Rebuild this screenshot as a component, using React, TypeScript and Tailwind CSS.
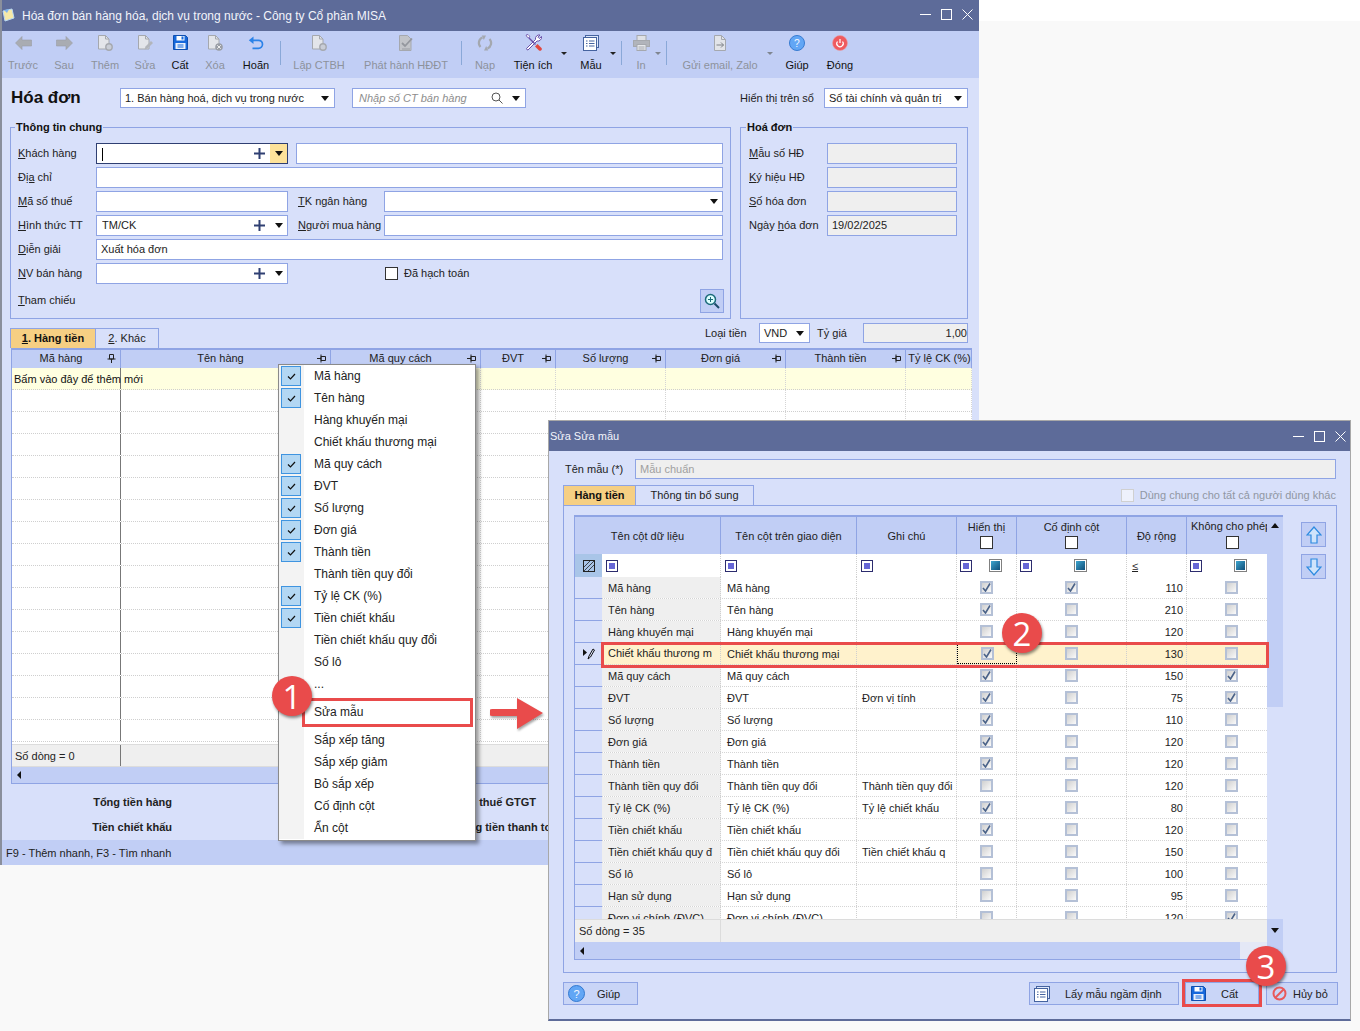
import React from "react";

const B = "border border-[#8fa4e4]";

function Caret({ c = "#111" }: { c?: string }) {
  return (
    <svg width="8" height="5" viewBox="0 0 8 5" className="shrink-0">
      <path d="M0 0h8L4 5z" fill={c} />
    </svg>
  );
}

function Plus() {
  return (
    <svg width="11" height="11" viewBox="0 0 11 11" className="shrink-0">
      <path d="M5.5 0v11M0 5.5h11" stroke="#2f3f72" strokeWidth="2" />
    </svg>
  );
}

function WinControls() {
  return (
    <div className="flex items-center gap-[10px]">
      <svg width="11" height="11" viewBox="0 0 11 11"><path d="M0 5.5h11" stroke="#fff" /></svg>
      <svg width="11" height="11" viewBox="0 0 11 11"><rect x=".5" y=".5" width="10" height="10" fill="none" stroke="#fff" /></svg>
      <svg width="11" height="11" viewBox="0 0 11 11"><path d="M.5.5l10 10M10.5.5l-10 10" stroke="#fff" /></svg>
    </div>
  );
}

/* ---------- toolbar icons ---------- */
const G = "#a5a8ae";
function IconArrow({ dir }: { dir: "l" | "r" }) {
  return (
    <svg width="17" height="14" viewBox="0 0 17 14" style={{ transform: dir === "r" ? "scaleX(-1)" : undefined }}>
      <path d="M.5 7L7 .5V4h9.500v6H7v3.500z" fill="#a9acb2" stroke="#9a9da4" strokeWidth=".6" />
    </svg>
  );
}
function Doc({ children }: { children?: React.ReactNode }) {
  return (
    <svg width="15" height="16" viewBox="0 0 15 16">
      <path d="M.5.5h7l3.500 3.500v10h-10.500z" fill="#e3e5ea" stroke={G} />
      <path d="M7.500.5v3.500h3.500" fill="none" stroke={G} />
      {children}
    </svg>
  );
}
function IconNew() {
  return <Doc><circle cx="11" cy="12" r="3.200" fill="#c9cdd6" stroke={G} strokeWidth="1.400" /></Doc>;
}
function IconEdit() {
  return <Doc><path d="M6.500 14.500l1-3 5.500-5.500 2 2-5.500 5.500z" fill="#b2b5bb" /></Doc>;
}
function IconDel() {
  return <Doc><circle cx="11" cy="12" r="3.800" fill="#9a9ea6" /><path d="M9.200 10.200l3.600 3.600M12.800 10.200l-3.600 3.600" stroke="#eee" /></Doc>;
}
function IconSave({ s = 15 }: { s?: number }) {
  return (
    <svg width={s} height={s} viewBox="0 0 15 15">
      <path d="M.5.5h12l2 2v12H.5z" fill="#1668dc" stroke="#0f4fb0" />
      <rect x="3.500" y="1" width="8" height="4.500" fill="#fff" />
      <rect x="8.500" y="1.500" width="2" height="3" fill="#1668dc" />
      <rect x="2.500" y="8" width="10" height="6" fill="#e9f0fb" />
      <path d="M4.500 10h6M4.500 12h6" stroke="#1668dc" />
    </svg>
  );
}
function IconUndo() {
  return (
    <svg width="16" height="14" viewBox="0 0 16 14">
      <path d="M5.500.5L.8 4.300 5.500 8z" fill="#2b82e8" />
      <path d="M3 4.300h7.500a3.800 3.800 0 010 8H4.500" fill="none" stroke="#2b82e8" strokeWidth="1.700" />
    </svg>
  );
}
function IconPublish() {
  return (
    <svg width="15" height="16" viewBox="0 0 15 16">
      <path d="M.5.5h8l3.500 3.500v11.500H.5z" fill="#c2c4c9" stroke={G} />
      <path d="M3 8l3 3 7-7.500" fill="none" stroke="#94979e" strokeWidth="1.800" />
      <path d="M3 14h8" stroke="#9a9da4" />
    </svg>
  );
}
function IconReload() {
  return (
    <svg width="16" height="16" viewBox="0 0 16 16" fill="none" stroke="#a4a8af" strokeWidth="2.200">
      <path d="M3.500 12A5.800 5.800 0 015.500 2.600" />
      <path d="M12.500 4a5.800 5.800 0 01-2 9.400" />
      <path d="M9 .5L4.800 .5 6.800 5z" fill="#a4a8af" stroke="none" />
      <path d="M7 15.500h4.200L9.200 11z" fill="#a4a8af" stroke="none" />
    </svg>
  );
}
function IconTools() {
  return (
    <svg width="17" height="17" viewBox="0 0 17 17">
      <path d="M1.500 14.500l9-9a3.800 3.800 0 014.500-4.500l-2 2.200 1.300 1.300 2.200-2a3.800 3.800 0 01-4.500 4.500l-9 9a1.600 1.600 0 01-1.500-1.500z" fill="#fff" stroke="#6a4fa8" />
      <path d="M1 1l2-.5 1.700 1.700-.7 1.800L2.200 3.200z" fill="#fff" stroke="#6a4fa8" strokeWidth=".8" />
      <path d="M4 4l6.500 6.500" stroke="#6a4fa8" strokeWidth="1.400" />
      <path d="M10 12.500l2.500-2.500 4 4a1.800 1.800 0 01-2.500 2.500z" fill="#e2473f" />
    </svg>
  );
}
function IconTemplate({ c = "#45639f" }: { c?: string }) {
  return (
    <svg width="16" height="16" viewBox="0 0 16 16">
      <rect x="2.500" y=".5" width="13" height="12" fill="#dfe8fb" stroke={c} />
      <rect x=".5" y="2.500" width="13" height="13" fill="#fff" stroke={c} />
      <path d="M3 6h1.500M3 8.500h1.500M3 11h1.500M6 6h5.500M6 8.500h5.500M6 11h5.500" stroke={c} />
    </svg>
  );
}
function IconPrint() {
  return (
    <svg width="17" height="16" viewBox="0 0 17 16">
      <rect x="4" y=".5" width="9" height="5" fill="#dfe1e6" stroke={G} />
      <rect x=".5" y="5.500" width="16" height="6" fill="#b1b4bb" stroke={G} />
      <rect x="4" y="9.500" width="9" height="6" fill="#e6e8ec" stroke={G} />
      <path d="M5.500 12h6M5.500 14h6" stroke={G} />
    </svg>
  );
}
function IconSend() {
  return (
    <svg width="12" height="16" viewBox="0 0 12 16">
      <path d="M.5.5h7l4 4v11H.5z" fill="#e2e4e9" stroke={G} />
      <path d="M7.500.5v4h4" fill="none" stroke={G} />
      <path d="M2.500 10h7M7 7.500l2.500 2.500L7 12.500" fill="none" stroke="#7f8288" />
    </svg>
  );
}
function IconHelp({ s = 16 }: { s?: number }) {
  return (
    <svg width={s} height={s} viewBox="0 0 17 17">
      <circle cx="8.500" cy="8.500" r="8" fill="#62a6f5" stroke="#3278cf" />
      <text x="8.500" y="12.500" textAnchor="middle" fontSize="11" fill="#f2f7ff" fontFamily="Liberation Sans">?</text>
    </svg>
  );
}
function IconPower() {
  return (
    <svg width="16" height="16" viewBox="0 0 16 16">
      <circle cx="8" cy="8" r="7.500" fill="#ef5a5f" stroke="#e5a0a8" strokeWidth=".6" />
      <path d="M5.500 6.500a3.200 3.200 0 105 0M8 4v4" fill="none" stroke="#fff" strokeWidth="1.200" />
    </svg>
  );
}

/* ---------- toolbar ---------- */
function Tool({ w, label, icon, on }: { w: string; label: string; icon: React.ReactNode; on?: boolean }) {
  return (
    <div className={`${w} shrink-0 flex flex-col items-center pt-[2px]`}>
      <div className="h-[19px] flex items-center justify-center">{icon}</div>
      <div className={`mt-[5px] whitespace-nowrap ${on ? "text-[#111]" : "text-[#8d929c]"}`}>{label}</div>
    </div>
  );
}
function ToolCaret({ cls, c }: { cls: string; c: string }) {
  return (
    <div className={`${cls} w-[6px] shrink-0 pt-[21px] flex justify-center`}>
      <svg width="6" height="3" viewBox="0 0 6 3" className="shrink-0"><path d="M0 0h6L3 3z" fill={c} /></svg>
    </div>
  );
}
function Sep({ w }: { w: string }) {
  return (
    <div className={`${w} shrink-0 flex justify-center pt-[10px]`}>
      <div className="w-px h-[24px] bg-[#8aa8d8]" />
    </div>
  );
}

function Toolbar() {
  return (
    <div className="h-[47px] bg-[#c1cef5] flex pl-[1px]">
      <Tool w="w-[40px]" label="Trước" icon={<IconArrow dir="l" />} />
      <Tool w="w-[42px]" label="Sau" icon={<IconArrow dir="r" />} />
      <Tool w="w-[40px]" label="Thêm" icon={<IconNew />} />
      <Tool w="w-[40px]" label="Sửa" icon={<IconEdit />} />
      <Tool w="w-[30px]" label="Cất" icon={<IconSave />} on />
      <Tool w="w-[40px]" label="Xóa" icon={<IconDel />} />
      <Tool w="w-[42px]" label="Hoãn" icon={<IconUndo />} on />
      <Sep w="w-[6px]" />
      <Tool w="w-[72px]" label="Lập CTBH" icon={<IconNew />} />
      <Tool w="w-[102px]" label="Phát hành HĐĐT" icon={<IconPublish />} />
      <Sep w="w-[8px]" />
      <Tool w="w-[40px]" label="Nạp" icon={<IconReload />} />
      <Tool w="w-[56px]" label="Tiện ích" icon={<IconTools />} on />
      <ToolCaret cls="" c="#222" />
      <Tool w="w-[44px] ml-[2px]" label="Mẫu" icon={<IconTemplate />} on />
      <ToolCaret cls="-ml-[3px]" c="#222" />
      <Sep w="w-[10px]" />
      <Tool w="w-[30px]" label="In" icon={<IconPrint />} />
      <ToolCaret cls="-ml-[1px]" c="#7f8590" />
      <Sep w="w-[10px]" />
      <Tool w="w-[98px]" label="Gửi email, Zalo" icon={<IconSend />} />
      <ToolCaret cls="-ml-[2px]" c="#7f8590" />
      <Tool w="w-[48px]" label="Giúp" icon={<IconHelp />} on />
      <Tool w="w-[38px]" label="Đóng" icon={<IconPower />} on />
    </div>
  );
}

/* ---------- form ---------- */
function Lbl({ w, pre = "", u, post = "" }: { w: string; pre?: string; u: string; post?: string }) {
  return (
    <div className={`${w} shrink-0 whitespace-nowrap pb-[1px]`}>
      {pre}<u>{u}</u>{post}
    </div>
  );
}
function Input({ cls, children, bg = "bg-white" }: { cls: string; children?: React.ReactNode; bg?: string }) {
  return <div className={`${cls} h-[21px] ${B} ${bg} flex items-center px-[4px] pb-[1px] whitespace-nowrap overflow-hidden`}>{children}</div>;
}
function Combo({ cls, text, active }: { cls: string; text?: string; active?: boolean }) {
  return (
    <div className={`${cls} h-[21px] border ${active ? "border-[#2f3f72]" : "border-[#8fa4e4]"} bg-white flex items-center pl-[5px]`}>
      <div className="flex-1 truncate pb-[1px]">{active ? <span className="inline-block w-px h-[13px] bg-black align-middle" /> : text}</div>
      <Plus />
      <div className={`w-[17px] ml-[5px] h-full flex items-center justify-center ${active ? "bg-[#fde29a]" : ""}`}><Caret /></div>
    </div>
  );
}
function Legend({ text, cls }: { text: string; cls: string }) {
  return <div className={`absolute -top-[8px] ${cls} px-[1px] bg-[#d8e0fa] font-bold text-[#111] leading-[14px]`}>{text}</div>;
}

function Form() {
  return (
    <div className="flex">
      <div className={`relative ml-[10px] w-[721px] h-[192px] ${B} pl-[7px] pt-[15px] flex flex-col gap-[3px]`}>
        <Legend text="Thông tin chung" cls="left-[4px]" />
        <div className="flex items-center">
          <Lbl w="w-[78px]" u="K" post="hách hàng" />
          <Combo cls="w-[192px]" active />
          <Input cls="w-[427px] ml-[8px]" />
        </div>
        <div className="flex items-center">
          <Lbl w="w-[78px]" pre="Đ" u="ịa" post=" chỉ" />
          <Input cls="w-[627px]" />
        </div>
        <div className="flex items-center">
          <Lbl w="w-[78px]" u="M" post="ã số thuế" />
          <Input cls="w-[192px]" />
          <Lbl w="w-[86px] ml-[10px]" u="T" post="K ngân hàng" />
          <div className={`w-[339px] h-[21px] ${B} bg-white flex items-center justify-end pr-[4px]`}><Caret /></div>
        </div>
        <div className="flex items-center">
          <Lbl w="w-[78px]" u="H" post="ình thức TT" />
          <Combo cls="w-[192px]" text="TM/CK" />
          <Lbl w="w-[86px] ml-[10px]" u="N" post="gười mua hàng" />
          <Input cls="w-[339px]" />
        </div>
        <div className="flex items-center">
          <Lbl w="w-[78px]" u="D" post="iễn giải" />
          <Input cls="w-[627px]">Xuất hóa đơn</Input>
        </div>
        <div className="flex items-center">
          <Lbl w="w-[78px]" u="N" post="V bán hàng" />
          <Combo cls="w-[192px]" />
          <div className="w-[13px] h-[13px] ml-[97px] border border-[#333] bg-white" />
          <div className="ml-[6px] pb-[1px]">Đã hạch toán</div>
        </div>
        <div className="flex items-center h-[24px] mt-[2px]">
          <div className="pb-[1px]"><Lbl w="w-[682px]" u="T" post="ham chiếu" /></div>
          <div className={`w-[24px] h-[24px] ${B} bg-[#c1cef5] flex items-center justify-center`}>
            <svg width="16" height="16" viewBox="0 0 16 16" fill="none">
              <circle cx="6.500" cy="6.500" r="5" stroke="#1c6b7a" strokeWidth="1.500" fill="#dff" />
              <path d="M10.500 10.500l4.500 4.500" stroke="#1c4a6a" strokeWidth="2" />
              <path d="M4 6.500h5M6.500 4v5" stroke="#1c6b7a" />
            </svg>
          </div>
        </div>
      </div>
      <div className={`relative ml-[9px] w-[228px] h-[192px] ${B} pl-[8px] pt-[15px] flex flex-col gap-[3px]`}>
        <Legend text="Hoá đơn" cls="left-[5px]" />
        {[
          ["", "M", "ẫu số HĐ", ""],
          ["", "K", "ý hiệu HĐ", ""],
          ["", "S", "ố hóa đơn", ""],
          ["Ngày ", "h", "óa đơn", "19/02/2025"],
        ].map(([pre, u, post, v]) => (
          <div key={u} className="flex items-center">
            <Lbl w="w-[78px]" pre={pre} u={u} post={post} />
            <Input cls="w-[130px]" bg="bg-[#efefef]">{v}</Input>
          </div>
        ))}
      </div>
    </div>
  );
}

const mainCols = [
  { t: "Mã hàng", w: "w-[109px]" },
  { t: "Tên hàng", w: "w-[210px]" },
  { t: "Mã quy cách", w: "w-[150px]" },
  { t: "ĐVT", w: "w-[75px]" },
  { t: "Số lượng", w: "w-[110px]" },
  { t: "Đơn giá", w: "w-[120px]" },
  { t: "Thành tiền", w: "w-[120px]" },
  { t: "Tỷ lệ CK (%)", w: "w-[66px]" },
];

function Pin({ down }: { down?: boolean }) {
  return (
    <svg width="9" height="9" viewBox="0 0 9 9" className="absolute right-[4px] top-[4px]" style={{ transform: down ? undefined : "rotate(90deg)" }}>
      <path d="M2.500.5h4v4.500h-4zM.5 5h8M4.500 5v4" fill="none" stroke="#222" />
    </svg>
  );
}

function MainGrid() {
  return (
    <div className="ml-[11px] w-[961px] border-l border-[#8fa4e4]">
      <div className="flex h-[20px] bg-[#c1cef5] border-t-2 border-[#8fa4e4]">
        {mainCols.map((c, i) => (
          <div key={c.t} className={`${c.w} relative shrink-0 text-center ${i < 7 ? "pr-[10px]" : "pl-[2px]"} border-r border-[#8fa4e4] leading-[16px] whitespace-nowrap overflow-hidden text-[#222]`}>
            {c.t}
            {i < 7 && <Pin down={i === 0} />}
          </div>
        ))}
      </div>
      <div className="h-[376px] overflow-hidden bg-white">
        {Array.from({ length: 17 }).map((_, r) => (
          <div key={r} className={`flex h-[22px] border-b border-dotted border-[#cfcfcf] ${r === 0 ? "bg-[#ffffe0]" : ""}`}>
            {mainCols.map((c, i) => (
              <div key={c.t} className={`${c.w} shrink-0 border-r ${i === 0 ? "border-solid border-[#777]" : "border-dotted border-[#d5d5d5]"} relative`}>
                {r === 0 && i === 0 && (
                  <div className="absolute left-[2px] top-[3px] whitespace-nowrap z-10 text-[#111]">Bấm vào đây để thêm mới</div>
                )}
              </div>
            ))}
          </div>
        ))}
      </div>
      <div className="flex h-[23px] bg-[#efefef] border-y border-[#dcdcdc] items-center">
        <div className="w-[109px] pl-[3px] h-full flex items-center border-r border-[#777]">Số dòng = 0</div>
      </div>
      <div className="h-[17px] bg-[#c1cef5] border-b border-[#8fa4e4] flex items-center pl-[5px]">
        <svg width="4" height="8" viewBox="0 0 4 8"><path d="M4 0v8L0 4z" fill="#111" /></svg>
      </div>
    </div>
  );
}

function Select({ cls, text }: { cls: string; text: string }) {
  return (
    <div className={`${cls} h-[20px] ${B} bg-white flex items-center pl-[4px] pr-[5px] whitespace-nowrap`}>
      <div className="flex-1 text-[#222]">{text}</div>
      <Caret />
    </div>
  );
}

function MainWindow() {
  return (
    <div className="absolute left-0 top-0 w-[979px] h-[865px] bg-[#d8e0fa] border-l-2 border-[#8a8f9c] flex flex-col">
      <div className="h-[31px] bg-[#5d6b99] flex items-start pt-[9px] pr-[6px] text-[#f2f4fb] text-[12px] shrink-0">
        <svg width="15" height="14" viewBox="0 0 15 14" className="shrink-0 mt-[-1px]">
          <path d="M1 3l9-2 2 9-9 3z" fill="#f6e9a8" stroke="#b9d9f5" />
          <path d="M2 2l3 3 2-4" fill="#7fb4ef" />
        </svg>
        <div className="ml-[5px] flex-1 whitespace-nowrap leading-[14px]">Hóa đơn bán hàng hóa, dịch vụ trong nước - Công ty Cổ phần MISA</div>
        <WinControls />
      </div>
      <Toolbar />
      <div className="flex items-center h-[20px] mt-[10px] ml-[9px] shrink-0">
        <div className="w-[109px] font-bold text-[17px] text-[#111]">Hóa đơn</div>
        <Select cls="w-[215px]" text="1. Bán hàng hoá, dịch vụ trong nước" />
        <div className={`ml-[17px] w-[174px] h-[20px] ${B} bg-white flex items-center pl-[6px] pr-[5px]`}>
          <div className="flex-1 italic text-[#8d8d8d]">Nhập số CT bán hàng</div>
          <svg width="12" height="12" viewBox="0 0 12 12" fill="none" className="mr-[9px]"><circle cx="5" cy="5" r="4" stroke="#555" /><path d="M8 8l3.500 3.500" stroke="#555" /></svg>
          <Caret />
        </div>
        <div className="ml-[214px] w-[84px] whitespace-nowrap text-[#222]">Hiển thị trên sổ</div>
        <Select cls="w-[144px]" text="Sổ tài chính và quản trị" />
      </div>
      <div className="mt-[19px] shrink-0 -ml-[2px]"><Form /></div>
      <div className="flex items-end h-[29px] shrink-0 ml-[7px] relative">
        <div className="flex h-[20px] ml-[1px]">
          <div className="w-[86px] bg-[#f6cf83] border border-[#8fa4e4] border-b-0 text-center font-bold leading-[18px] text-[#111]"><u>1</u>. Hàng tiền</div>
          <div className="w-[63px] border border-l-0 border-[#8fa4e4] border-b-0 text-center leading-[18px]"><u>2</u>. Khác</div>
        </div>
        <div className="ml-auto flex items-center self-start mt-[4px] mr-[11px] text-[#222]">
          <div className="w-[54px]">Loại tiền</div>
          <Select cls="w-[51px]" text="VND" />
          <div className="ml-[7px] w-[46px]">Tỷ giá</div>
          <div className={`w-[105px] h-[20px] ${B} bg-[#efefef] text-right leading-[18px]`}>1,00</div>
        </div>
      </div>
      <div className="-ml-[2px] shrink-0"><MainGrid /></div>
      <div className="h-[56px] shrink-0 grid grid-cols-[172px_364px] grid-rows-[25px_25px] pt-[10px] font-bold text-right text-[#222] whitespace-nowrap -ml-[2px]">
        <div>Tổng tiền hàng</div><div>Tổng tiền thuế GTGT</div>
        <div>Tiền chiết khấu</div><div className="-mr-[28px]">Tổng tiền thanh toán</div>
      </div>
      <div className="flex-1 bg-[#c1cef5] pl-[4px] flex items-center text-[#222]">F9 - Thêm nhanh, F3 - Tìm nhanh</div>
    </div>
  );
}

/* ---------- context menu ---------- */
const menuTop: [string, boolean][] = [
  ["Mã hàng", true], ["Tên hàng", true], ["Hàng khuyến mại", false], ["Chiết khấu thương mại", false],
  ["Mã quy cách", true], ["ĐVT", true], ["Số lượng", true], ["Đơn giá", true], ["Thành tiền", true],
  ["Thành tiền quy đổi", false], ["Tỷ lệ CK (%)", true], ["Tiền chiết khấu", true],
  ["Tiền chiết khấu quy đổi", false], ["Số lô", false], ["...", false],
];
const menuBottom = ["Sắp xếp tăng", "Sắp xếp giảm", "Bỏ sắp xếp", "Cố định cột", "Ẩn cột"];

function MenuRow({ text, checked, cls = "h-[22px]" }: { text: string; checked?: boolean; cls?: string }) {
  return (
    <div className={`flex items-center ${cls}`}>
      <div className="w-[25px] h-full shrink-0 bg-[#f3f3f3] flex items-center pl-[2px]">
        {checked && (
          <div className="w-[20px] h-[20px] bg-[#b3d7f3] border border-[#3f94e0] flex items-center justify-center">
            <svg width="9" height="7" viewBox="0 0 9 7" fill="none"><path d="M1 3.500l2.500 2.500L8 1" stroke="#111" strokeWidth="1.200" /></svg>
          </div>
        )}
      </div>
      <div className="pl-[10px] whitespace-nowrap text-[#222] text-[12px]">{text}</div>
    </div>
  );
}

function ContextMenu() {
  return (
    <div className="absolute left-[278px] top-[364px] w-[198px] h-[477px] bg-white border border-[#8a8a8a] shadow-[3px_3px_4px_rgba(0,0,0,0.4)] overflow-hidden">
      {menuTop.map(([t, c]) => <MenuRow key={t} text={t} checked={c} />)}
      <MenuRow text="Sửa mẫu" cls="h-[34px]" />
      {menuBottom.map((t) => <MenuRow key={t} text={t} />)}
    </div>
  );
}

/* ---------- dialog ---------- */
type DRow = [string, string, string, boolean, boolean, string, boolean];
const dRows: DRow[] = [
  ["Mã hàng", "Mã hàng", "", true, true, "110", false],
  ["Tên hàng", "Tên hàng", "", true, false, "210", false],
  ["Hàng khuyến mại", "Hàng khuyến mại", "", false, false, "120", false],
  ["Chiết khấu thương m", "Chiết khấu thương mại", "", true, false, "130", false],
  ["Mã quy cách", "Mã quy cách", "", true, false, "150", true],
  ["ĐVT", "ĐVT", "Đơn vị tính", true, false, "75", true],
  ["Số lượng", "Số lượng", "", true, false, "110", false],
  ["Đơn giá", "Đơn giá", "", true, false, "120", false],
  ["Thành tiền", "Thành tiền", "", true, false, "120", false],
  ["Thành tiền quy đổi", "Thành tiền quy đổi", "Thành tiền quy đổi", false, false, "120", false],
  ["Tỷ lệ CK (%)", "Tỷ lệ CK (%)", "Tỷ lệ chiết khấu", true, false, "80", false],
  ["Tiền chiết khấu", "Tiền chiết khấu", "", true, false, "120", false],
  ["Tiền chiết khấu quy đ", "Tiền chiết khấu quy đổi", "Tiền chiết khấu q", false, false, "150", false],
  ["Số lô", "Số lô", "", false, false, "100", false],
  ["Hạn sử dụng", "Hạn sử dụng", "", false, false, "95", false],
  ["Đơn vị chính (ĐVC)", "Đơn vị chính (ĐVC)", "", false, false, "120", true],
];

function CellCheck({ on }: { on: boolean }) {
  return (
    <div className="w-[13px] h-[13px] border-2 border-[#b4c0d6] bg-gradient-to-br from-[#d0d0d0] to-[#fafafa] flex items-center justify-center">
      {on && <svg width="9" height="9" viewBox="0 0 9 9" fill="none"><path d="M1 5l2.500 3L8 .5" stroke="#4a6288" strokeWidth="1.600" /></svg>}
    </div>
  );
}
function FilterEq() {
  return (
    <div className="w-[12px] h-[12px] border border-[#2c2c6e] bg-white flex items-center justify-center shrink-0">
      <div className="w-[6px] h-[6px] bg-[#6666d6]" />
    </div>
  );
}
function FilterCb() {
  return (
    <div className="w-[13px] h-[13px] border border-[#808080] bg-white flex items-center justify-center shrink-0">
      <div className="w-[9px] h-[9px] bg-gradient-to-br from-[#3ea6cf] to-[#0f4f7a]" />
    </div>
  );
}

const dW = ["w-[27px]", "w-[119px]", "w-[136px]", "w-[100px]", "w-[60px]", "w-[110px]", "w-[60px]", "w-[80px]"];
const DOT = "border-r border-dotted border-[#cfcfcf]";

function HdrCheck({ cls = "mt-[1px]" }: { cls?: string }) {
  return <div className={`w-[13px] h-[13px] border border-[#333] bg-white ${cls}`} />;
}

function DialogGrid() {
  return (
    <div className="flex w-[709px] h-[445px] border-l border-[#8fa4e4] border-b">
      <div className="w-[692px] flex flex-col">
        <div className="flex h-[39px] bg-[#c1cef5] border-t-2 border-[#8fa4e4] shrink-0 text-[#222]">
          <div className="w-[146px] border-r border-[#8fa4e4] flex items-center justify-center">Tên cột dữ liệu</div>
          <div className={`${dW[2]} border-r border-[#8fa4e4] flex items-center justify-center`}>Tên cột trên giao diện</div>
          <div className={`${dW[3]} border-r border-[#8fa4e4] flex items-center justify-center`}>Ghi chú</div>
          <div className={`${dW[4]} border-r border-[#8fa4e4] flex flex-col items-center pt-[2px]`}>Hiển thị<HdrCheck /></div>
          <div className={`${dW[5]} border-r border-[#8fa4e4] flex flex-col items-center pt-[2px]`}>Cố định cột<HdrCheck /></div>
          <div className={`${dW[6]} border-r border-[#8fa4e4] flex items-center justify-center`}>Độ rộng</div>
          <div className={`${dW[7]} flex flex-col items-center pt-[1px] whitespace-nowrap overflow-hidden`}>
            <div className="w-[80px] pl-[4px] text-left overflow-hidden">Không cho phép</div>
            <HdrCheck cls="mt-[2px] ml-[10px]" />
          </div>
        </div>
        <div className="flex h-[23px] bg-white shrink-0 items-center">
          <div className={`${dW[0]} h-full bg-[#a9c5e8] flex items-center justify-center`}>
            <svg width="12" height="12" viewBox="0 0 12 12" fill="none"><rect x=".5" y=".5" width="11" height="11" stroke="#222" /><path d="M1 11L11 1M5 11l6-6M1 7l6-6" stroke="#222" strokeWidth=".8" /></svg>
          </div>
          {[0, 1, 2].map((i) => (
            <div key={i} className={`${dW[i + 1]} h-full flex items-center pl-[4px] ${DOT}`}><FilterEq /></div>
          ))}
          <div className={`${dW[4]} h-full flex items-center justify-between pl-[3px] pr-[14px] ${DOT}`}><FilterEq /><FilterCb /></div>
          <div className={`${dW[5]} h-full flex items-center justify-between pl-[3px] pr-[39px] ${DOT}`}><FilterEq /><FilterCb /></div>
          <div className={`${dW[6]} h-full flex items-center pl-[5px] ${DOT} text-[#222] underline`}>≤</div>
          <div className={`${dW[7]} h-full flex items-center justify-between pl-[3px] pr-[20px]`}><FilterEq /><FilterCb /></div>
        </div>
        <div className="flex-1 overflow-hidden bg-white min-h-0">
          {dRows.map((r, i) => {
            const sel = i === 3;
            return (
              <div key={r[0]} className={`flex h-[22px] border-b border-dotted border-[#d5d5d5] text-[#222] ${sel ? "bg-[#fff2cc]" : ""}`}>
                <div className={`${dW[0]} bg-[#d8e0fa] border-b border-[#8fa4e4] -mb-px flex items-center justify-center`}>
                  {sel && (
                    <svg width="12" height="12" viewBox="0 0 12 12"><path d="M0 1l4 3.500L0 8z" fill="#111" /><path d="M5 11l1-3 4-7 1.500 1-4 7z" fill="none" stroke="#111" /></svg>
                  )}
                </div>
                <div className={`${dW[1]} ${sel ? "pb-[2px]" : "bg-[#efefef]"} ${DOT} pl-[6px] flex items-center whitespace-nowrap overflow-hidden`}>{r[0]}</div>
                <div className={`${dW[2]} ${DOT} pl-[6px] flex items-center whitespace-nowrap overflow-hidden`}>{r[1]}</div>
                <div className={`${dW[3]} ${DOT} pl-[5px] flex items-center whitespace-nowrap overflow-hidden`}>{r[2]}</div>
                <div className={`${dW[4]} ${sel ? "border border-dotted border-black" : DOT} flex items-center justify-center`}><CellCheck on={r[3]} /></div>
                <div className={`${dW[5]} ${DOT} flex items-center justify-center`}><CellCheck on={r[4]} /></div>
                <div className={`${dW[6]} ${DOT} flex items-center justify-end pr-[3px]`}>{r[5]}</div>
                <div className={`${dW[7]} flex items-center justify-center pl-[8px]`}><CellCheck on={r[6]} /></div>
              </div>
            );
          })}
        </div>
        <div className="flex h-[23px] shrink-0 bg-[#efefef] border-t border-[#dcdcdc]">
          <div className="w-[146px] pl-[4px] flex items-center border-r border-[#dcdcdc] text-[#222]">Số dòng = 35</div>
        </div>
        <div className="flex h-[17px] shrink-0">
          <div className="w-[665px] bg-[#c1cef5] flex items-center pl-[5px]">
            <svg width="4" height="8" viewBox="0 0 4 8"><path d="M4 0v8L0 4z" fill="#111" /></svg>
          </div>
          <div className="flex-1 bg-[#e4e8f6]" />
        </div>
      </div>
      <div className="w-[17px] flex flex-col bg-[#d8e0fa]">
        <div className="h-[192px] bg-[#c1cef5] flex justify-center pt-[6px] border-t-2 border-[#8fa4e4]">
          <svg width="8" height="5" viewBox="0 0 8 5" className="shrink-0"><path d="M0 5h8L4 0z" fill="#111" /></svg>
        </div>
        <div className="flex-1" />
        <div className="h-[23px] bg-[#c1cef5] flex items-center justify-center"><Caret /></div>
        <div className="h-[17px] bg-[#c1cef5]" />
      </div>
    </div>
  );
}

function ArrowBtn({ up }: { up?: boolean }) {
  return (
    <div className={`w-[25px] h-[25px] ${B} bg-[#c1cef5] flex items-center justify-center`}>
      <svg width="16" height="18" viewBox="0 0 16 18" style={{ transform: up ? undefined : "scaleY(-1)" }}>
        <path d="M8 1L1 9h4v8h6V9h4z" fill="#cfe4fb" stroke="#2d8ae0" strokeWidth="1.200" />
      </svg>
    </div>
  );
}

function DlgBtn({ cls, icon, text, tcls = "" }: { cls: string; icon: React.ReactNode; text: string; tcls?: string }) {
  return (
    <div className={`${cls} h-[23px] ${B} bg-[#c9d5f7] flex items-center pl-[3px] text-[#222] whitespace-nowrap`}>
      <div className="w-[18px] flex justify-center shrink-0">{icon}</div>
      <div className={tcls}>{text}</div>
    </div>
  );
}

function Dialog() {
  return (
    <div className="absolute left-[548px] top-[420px] w-[803px] h-[601px] bg-[#d8e0fa] border border-[#a8a8a8] border-b-2 border-b-[#5d6b99] flex flex-col overflow-hidden">
      <div className="h-[30px] bg-[#5d6b99] shrink-0 flex items-center pl-[1px] pr-[4px] text-[#f2f4fb]">
        <div className="flex-1">Sửa Sửa mẫu</div>
        <WinControls />
      </div>
      <div className="flex items-center h-[20px] mt-[8px] ml-[16px] shrink-0">
        <div className="w-[70px] text-[#222]">Tên mẫu (*)</div>
        <div className={`w-[701px] h-[20px] ${B} bg-[#efefef] pl-[4px] leading-[18px] text-[#a0a0a0]`}>Mẫu chuẩn</div>
      </div>
      <div className="flex items-end h-[26px] ml-[14px] mr-[14px] shrink-0">
        <div className="w-[73px] h-[20px] bg-[#f6cf83] border border-b-0 border-[#8fa4e4] text-center leading-[18px] font-bold text-[#111]">Hàng tiền</div>
        <div className="w-[118px] h-[20px] border border-l-0 border-b-0 border-[#8fa4e4] text-center leading-[18px] text-[#222]">Thông tin bổ sung</div>
        <div className="ml-auto flex items-center h-[20px] text-[#9097a3]">
          <div className="w-[13px] h-[13px] border border-[#d0d0d0] bg-[#eef1fc] mr-[6px]" />
          Dùng chung cho tất cả người dùng khác
        </div>
      </div>
      <div className={`ml-[14px] w-[774px] h-[468px] ${B} flex pl-[10px] pt-[9px] shrink-0`}>
        <DialogGrid />
        <div className="ml-[18px] pt-[7px] flex flex-col gap-[7px]">
          <ArrowBtn up />
          <ArrowBtn />
        </div>
      </div>
      <div className="flex items-center mt-[9px] ml-[14px] shrink-0">
        <DlgBtn cls="w-[75px]" icon={<IconHelp s={17} />} text="Giúp" tcls="ml-[12px]" />
        <DlgBtn cls="w-[150px] ml-[391px]" icon={<IconTemplate />} text="Lấy mẫu ngầm định" tcls="ml-[14px]" />
        <DlgBtn cls="w-[74px] ml-[6px]" icon={<IconSave s={15} />} text="Cất" tcls="ml-[14px]" />
        <DlgBtn
          cls="w-[72px] ml-[7px]"
          icon={
            <svg width="15" height="15" viewBox="0 0 15 15" fill="none"><circle cx="7.500" cy="7.500" r="6" stroke="#e8595c" strokeWidth="2" /><path d="M3.500 11.500l8-8" stroke="#e8595c" strokeWidth="2" /></svg>
          }
          text="Hủy bỏ"
          tcls="ml-[5px]"
        />
      </div>
    </div>
  );
}

/* ---------- annotations ---------- */
function Badge({ n, cls }: { n: string; cls: string }) {
  return (
    <div className={`absolute ${cls} w-[40px] h-[40px] rounded-full bg-[#e94b4b] shadow-[1px_2px_3px_rgba(0,0,0,0.45)] flex items-center justify-center text-white text-[33px] leading-none font-['Open_Sans',sans-serif]`}>
      {n}
    </div>
  );
}
function RedBox({ cls }: { cls: string }) {
  return <div className={`absolute ${cls} border-[3px] border-[#e94b4b]`} />;
}

export default function App() {
  return (
    <div className="relative w-[1360px] h-[1031px] overflow-hidden bg-[#f9f9f9] font-['Liberation_Sans',sans-serif] text-[11px] leading-[16px] text-[#222]">
      <div className="absolute left-0 top-0 w-[1360px] h-[21px] bg-white" />
      <MainWindow />
      <ContextMenu />
      <Dialog />
      <RedBox cls="left-[302px] top-[698px] w-[171px] h-[29px]" />
      <RedBox cls="left-[601px] top-[642px] w-[668px] h-[26px]" />
      <RedBox cls="left-[1182px] top-[979px] w-[80px] h-[28px]" />
      <Badge n="1" cls="left-[272px] top-[676px]" />
      <Badge n="2" cls="left-[1002px] top-[613px]" />
      <Badge n="3" cls="left-[1246px] top-[946px]" />
      <svg width="56" height="34" viewBox="0 0 56 34" className="absolute left-[490px] top-[696px] drop-shadow-[1px_2px_1px_rgba(0,0,0,0.35)]">
        <path d="M2 13h25V2l26 15-26 16V20H2a3.500 3.500 0 010-7z" fill="#e94b4b" />
      </svg>
    </div>
  );
}
